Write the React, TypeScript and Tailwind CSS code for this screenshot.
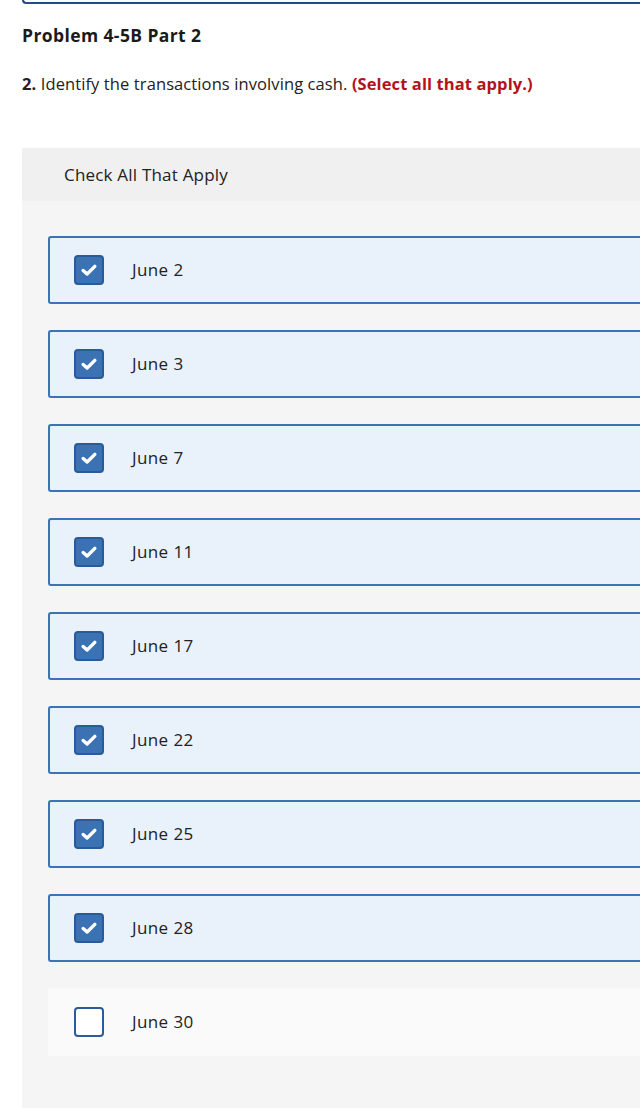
import { useState } from "react";

const dates = ["June 2", "June 3", "June 7", "June 11", "June 17", "June 22", "June 25", "June 28", "June 30"];

const CheckIcon = () => (
  <svg viewBox="0 0 16 16" className="w-[18px] h-[18px]">
    <path d="M2.8 8.4 L6.3 11.6 L13.2 4.8" fill="none" stroke="white" strokeWidth="3" strokeLinecap="round" strokeLinejoin="round" />
  </svg>
);

export default function App() {
  const [checked, setChecked] = useState<boolean[]>(dates.map((d) => d !== "June 30"));

  const toggle = (i: number) => setChecked((c) => c.map((v, j) => (j === i ? !v : v)));

  return (
    <div className="w-[640px] h-[1108px] overflow-hidden bg-white text-[#222]" style={{ fontFamily: "'Open Sans', Lato, sans-serif" }}>
      <div className="ml-[22px] h-[4px] border-l-2 border-b-2 border-[#234e86] rounded-bl-[5px]" />

      <h2 className="ml-[22px] mt-[19px] text-[17.5px] tracking-[0.4px] font-bold leading-[24px] text-[#1a1a1a]">Problem 4-5B Part 2</h2>

      <p className="ml-[22px] mt-[26px] text-[16.5px] tracking-[0.1px] leading-[22px] text-[#222]">
        <span className="font-bold">2.</span> Identify the transactions involving cash.{" "}
        <span className="font-bold text-[#b3121c]">(Select all that apply.)</span>
      </p>

      <div className="ml-[22px] mt-[53px] bg-[#f5f5f5] h-[960px]">
        <div className="h-[53px] bg-[#f0f0f0] flex items-center pl-[42px] text-[17px] tracking-[0.2px] text-[#222]">Check All That Apply</div>
        <ul className="pl-[26px] pt-[35px] flex flex-col gap-[26px]">
          {dates.map((d, i) => (
            <li
              key={d}
              onClick={() => toggle(i)}
              className={
                checked[i]
                  ? "h-[68px] flex items-center pl-[24px] bg-[#e9f1fb] border-2 border-r-0 border-[#3b74b6] rounded-l-[3px] cursor-pointer"
                  : "h-[68px] flex items-center pl-[26px] bg-[#fafafa] cursor-pointer"
              }
            >
              {checked[i] ? (
                <span className="w-[30px] h-[30px] rounded-[4px] bg-[#3a72b4] border-2 border-[#285b98] flex items-center justify-center">
                  <CheckIcon />
                </span>
              ) : (
                <span className="w-[30px] h-[30px] rounded-[4px] bg-white border-2 border-[#2a5d97]" />
              )}
              <span className="ml-[28px] text-[17px] tracking-[0.4px] text-[#222]">{d}</span>
            </li>
          ))}
        </ul>
      </div>
    </div>
  );
}
